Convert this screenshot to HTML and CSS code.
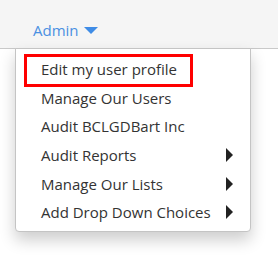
FILE: index.html
```html
<!DOCTYPE html>
<html>
<head>
<meta charset="utf-8">
<link rel="stylesheet" href="styles.css">
</head>
<body>
<div class="page">
  <header class="topbar">
    <a class="admin">Admin<span class="caret"></span></a>
  </header>
  <ul class="menu">
    <li class="item highlighted">Edit my user profile</li>
    <li class="item">Manage Our Users</li>
    <li class="item">Audit BCLGDBart Inc</li>
    <li class="item sub">Audit Reports<span class="arrow"></span></li>
    <li class="item sub">Manage Our Lists<span class="arrow"></span></li>
    <li class="item sub">Add Drop Down Choices<span class="arrow"></span></li>
  </ul>
</div>
</body>
</html>
```
FILE: styles.css
```css
html, body {
  margin: 0;
  padding: 0;
  background: #ffffff;
}
body {
  font-family: "Open Sans", "Liberation Sans", sans-serif;
}
.page {
  position: relative;
  width: 278px;
  height: 259px;
  overflow: hidden;
}
.topbar {
  height: 49px;
  background: #f5f5f5;
  border-bottom: 1px solid #c9c9c9;
  box-sizing: border-box;
  padding-left: 33px;
  display: flex;
  align-items: center;
}
.admin {
  color: #4a90e2;
  font-size: 15px;
  display: flex;
  align-items: center;
  margin-top: 12px;
}
.caret {
  display: inline-block;
  width: 0;
  height: 0;
  margin-left: 5px;
  border-left: 7px solid transparent;
  border-right: 7px solid transparent;
  border-top: 7px solid #3f8ce6;
}
.menu {
  position: absolute;
  top: 48px;
  left: 15px;
  width: 236px;
  box-sizing: border-box;
  margin: 0;
  list-style: none;
  padding: 6px 0 4px 0;
  background: #fff;
  border: 1px solid #c4c4c4;
  border-radius: 0 0 4px 4px;
  box-shadow: 0 8px 16px rgba(0,0,0,0.2);
}
.item {
  position: relative;
  display: flex;
  align-items: center;
  justify-content: space-between;
  height: 28.6px;
  padding: 0 17px 0 25px;
  font-size: 15px;
  color: #333;
  white-space: nowrap;
}
.highlighted::before {
  content: "";
  position: absolute;
  left: 8px;
  top: -1px;
  width: 169px;
  height: 33px;
  box-sizing: border-box;
  border: 3px solid #ff0000;
}
.arrow {
  width: 0;
  height: 0;
  border-top: 7px solid transparent;
  border-bottom: 7px solid transparent;
  border-left: 7px solid #222;
}
```
